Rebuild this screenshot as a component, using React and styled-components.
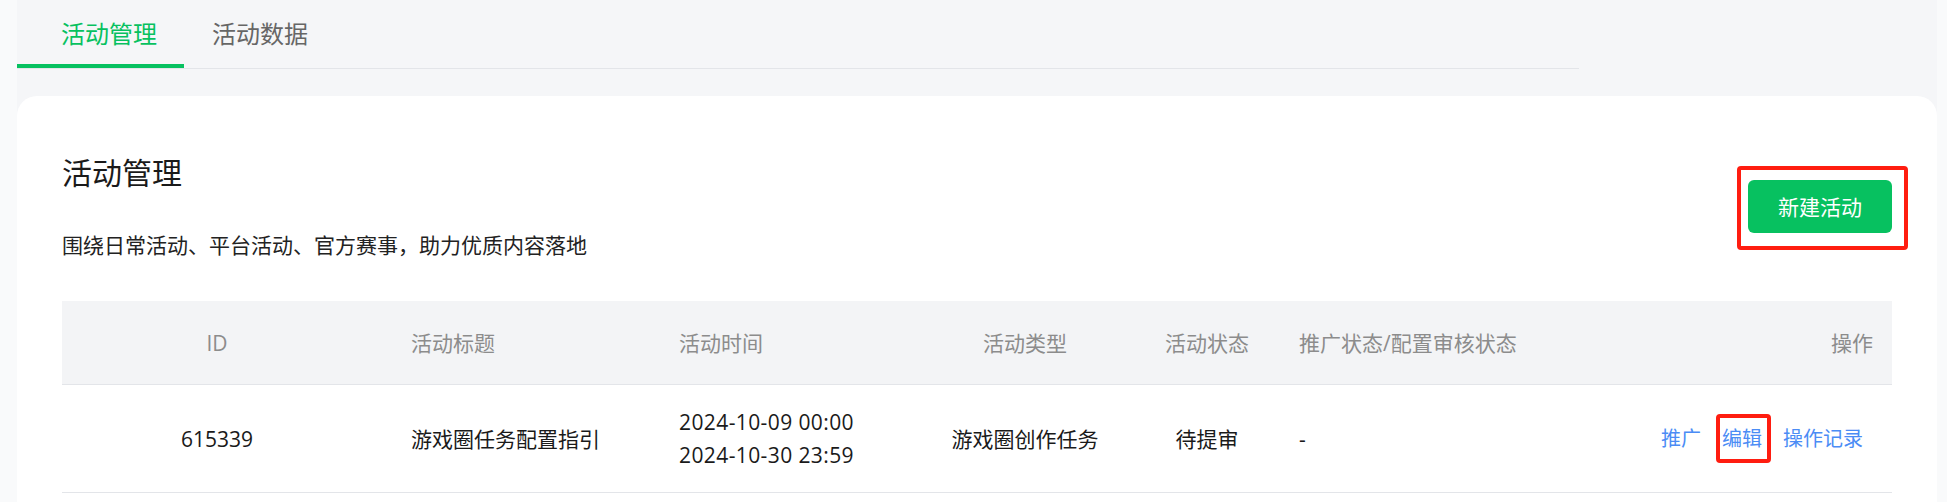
import styled, { createGlobalStyle } from "styled-components";

const GlobalStyle = createGlobalStyle`
  html, body {
    margin: 0;
    padding: 0;
    background: #f9fafb;
  }

  body {
    font-family: "Open Sans", "Noto Sans CJK SC", sans-serif;
    color: #1a1a1a;
  }

  * {
    box-sizing: border-box;
  }
`;

const Page = styled.div`
  padding: 0 10px 0 17px;
  min-height: 502px;
`;

const Main = styled.main`
  background: #f5f6f8;
  min-height: 502px;
`;

const TabBar = styled.nav`
  display: flex;
  width: 1562px;
  border-bottom: 1px solid #e3e5e9;
`;

const Tab = styled.div`
  height: 68px;
  padding: 14px ${(p) => p.$right}px 0 ${(p) => p.$left}px;
  font-size: 24px;
  line-height: 40px;
  color: ${(p) => (p.$active ? "#07c160" : "#666666")};
  border-bottom: 4px solid ${(p) => (p.$active ? "#07c160" : "transparent")};
  cursor: pointer;
`;

const Card = styled.section`
  margin-top: 27px;
  background: #ffffff;
  border-radius: 20px 20px 0 0;
  padding: 56px 45px 0;
  min-height: 406px;
`;

const CardHead = styled.div`
  display: flex;
  align-items: center;
  justify-content: space-between;
`;

const Title = styled.h1`
  margin: 0;
  font-size: 30px;
  line-height: 42px;
  font-weight: 400;
  color: #1a1a1a;
`;

const Desc = styled.p`
  margin: 36px 0 0;
  font-size: 21px;
  line-height: 30px;
  color: #222222;
`;

const Marked = styled.span`
  position: relative;
  display: inline-block;
`;

const Highlight = styled.span`
  position: absolute;
  inset: ${(p) => p.$inset};
  border: 4px solid #ff1d10;
  border-radius: 4px;
  pointer-events: none;
`;

const PrimaryButton = styled.button`
  display: block;
  width: 144px;
  height: 53px;
  border: none;
  border-radius: 6px;
  background: #07c160;
  color: #ffffff;
  font-family: inherit;
  font-size: 21px;
  cursor: pointer;
`;

const Table = styled.div`
  margin-top: 41px;
`;

const Row = styled.div`
  display: grid;
  grid-template-columns: 310px 268px 256px 258px 106px 340px 292px;
  align-items: center;
  height: ${(p) => (p.$head ? 84 : 108)}px;
  background: ${(p) => (p.$head ? "#f3f4f6" : "#ffffff")};
  border-bottom: 1px solid #e3e5e9;
  font-size: 21px;
  line-height: 30px;
  color: ${(p) => (p.$head ? "#8c8c8c" : "#1a1a1a")};
`;

const Cell = styled.div`
  text-align: ${(p) => p.$align};
  padding-left: ${(p) => (p.$align === "left" ? 39 : 0)}px;
  padding-right: ${(p) => (p.$align === "right" ? 19 : 0)}px;
  line-height: ${(p) => (p.$lines ? 33 : 30)}px;
  letter-spacing: ${(p) => (p.$lines ? 0.4 : 0)}px;
  white-space: nowrap;
`;

const ActionLink = styled.a`
  display: inline-block;
  padding: 0 10px 0 11px;
  font-size: 20px;
  color: #4b8cf5;
  text-decoration: none;
  cursor: pointer;
`;

const columns = [
  { key: "id", title: "ID", align: "center" },
  { key: "name", title: "活动标题", align: "left" },
  { key: "time", title: "活动时间", align: "left" },
  { key: "type", title: "活动类型", align: "center" },
  { key: "status", title: "活动状态", align: "center" },
  { key: "promo", title: "推广状态/配置审核状态", align: "left" },
  { key: "ops", title: "操作", align: "right" },
];

const rows = [
  {
    id: "615339",
    name: "游戏圈任务配置指引",
    time: ["2024-10-09 00:00", "2024-10-30 23:59"],
    type: "游戏圈创作任务",
    status: "待提审",
    promo: "-",
  },
];

const Actions = () => (
  <>
    <ActionLink>推广</ActionLink>
    <ActionLink>
      <Marked>
        编辑
        <Highlight $inset="-10px -9px -9px -6px" />
      </Marked>
    </ActionLink>
    <ActionLink>操作记录</ActionLink>
  </>
);

const renderCell = (row, key) => {
  if (key === "time") {
    return row.time.map((t) => <div key={t}>{t}</div>);
  }
  if (key === "ops") return <Actions />;
  return row[key];
};

export default function App() {
  return (
    <>
      <GlobalStyle />
      <Page>
        <Main>
          <TabBar>
            <Tab $active $left={44} $right={27}>
              活动管理
            </Tab>
            <Tab $left={28} $right={28}>
              活动数据
            </Tab>
          </TabBar>

          <Card>
            <CardHead>
              <div>
                <Title>活动管理</Title>
                <Desc>围绕日常活动、平台活动、官方赛事，助力优质内容落地</Desc>
              </div>
              <Marked>
                <PrimaryButton>新建活动</PrimaryButton>
                <Highlight $inset="-14px -16px -17px -11px" />
              </Marked>
            </CardHead>

            <Table>
              <Row $head>
                {columns.map((c) => (
                  <Cell key={c.key} $align={c.align}>
                    {c.title}
                  </Cell>
                ))}
              </Row>
              {rows.map((row) => (
                <Row key={row.id}>
                  {columns.map((c) => (
                    <Cell key={c.key} $align={c.align} $lines={c.key === "time"}>
                      {renderCell(row, c.key)}
                    </Cell>
                  ))}
                </Row>
              ))}
            </Table>
          </Card>
        </Main>
      </Page>
    </>
  );
}
